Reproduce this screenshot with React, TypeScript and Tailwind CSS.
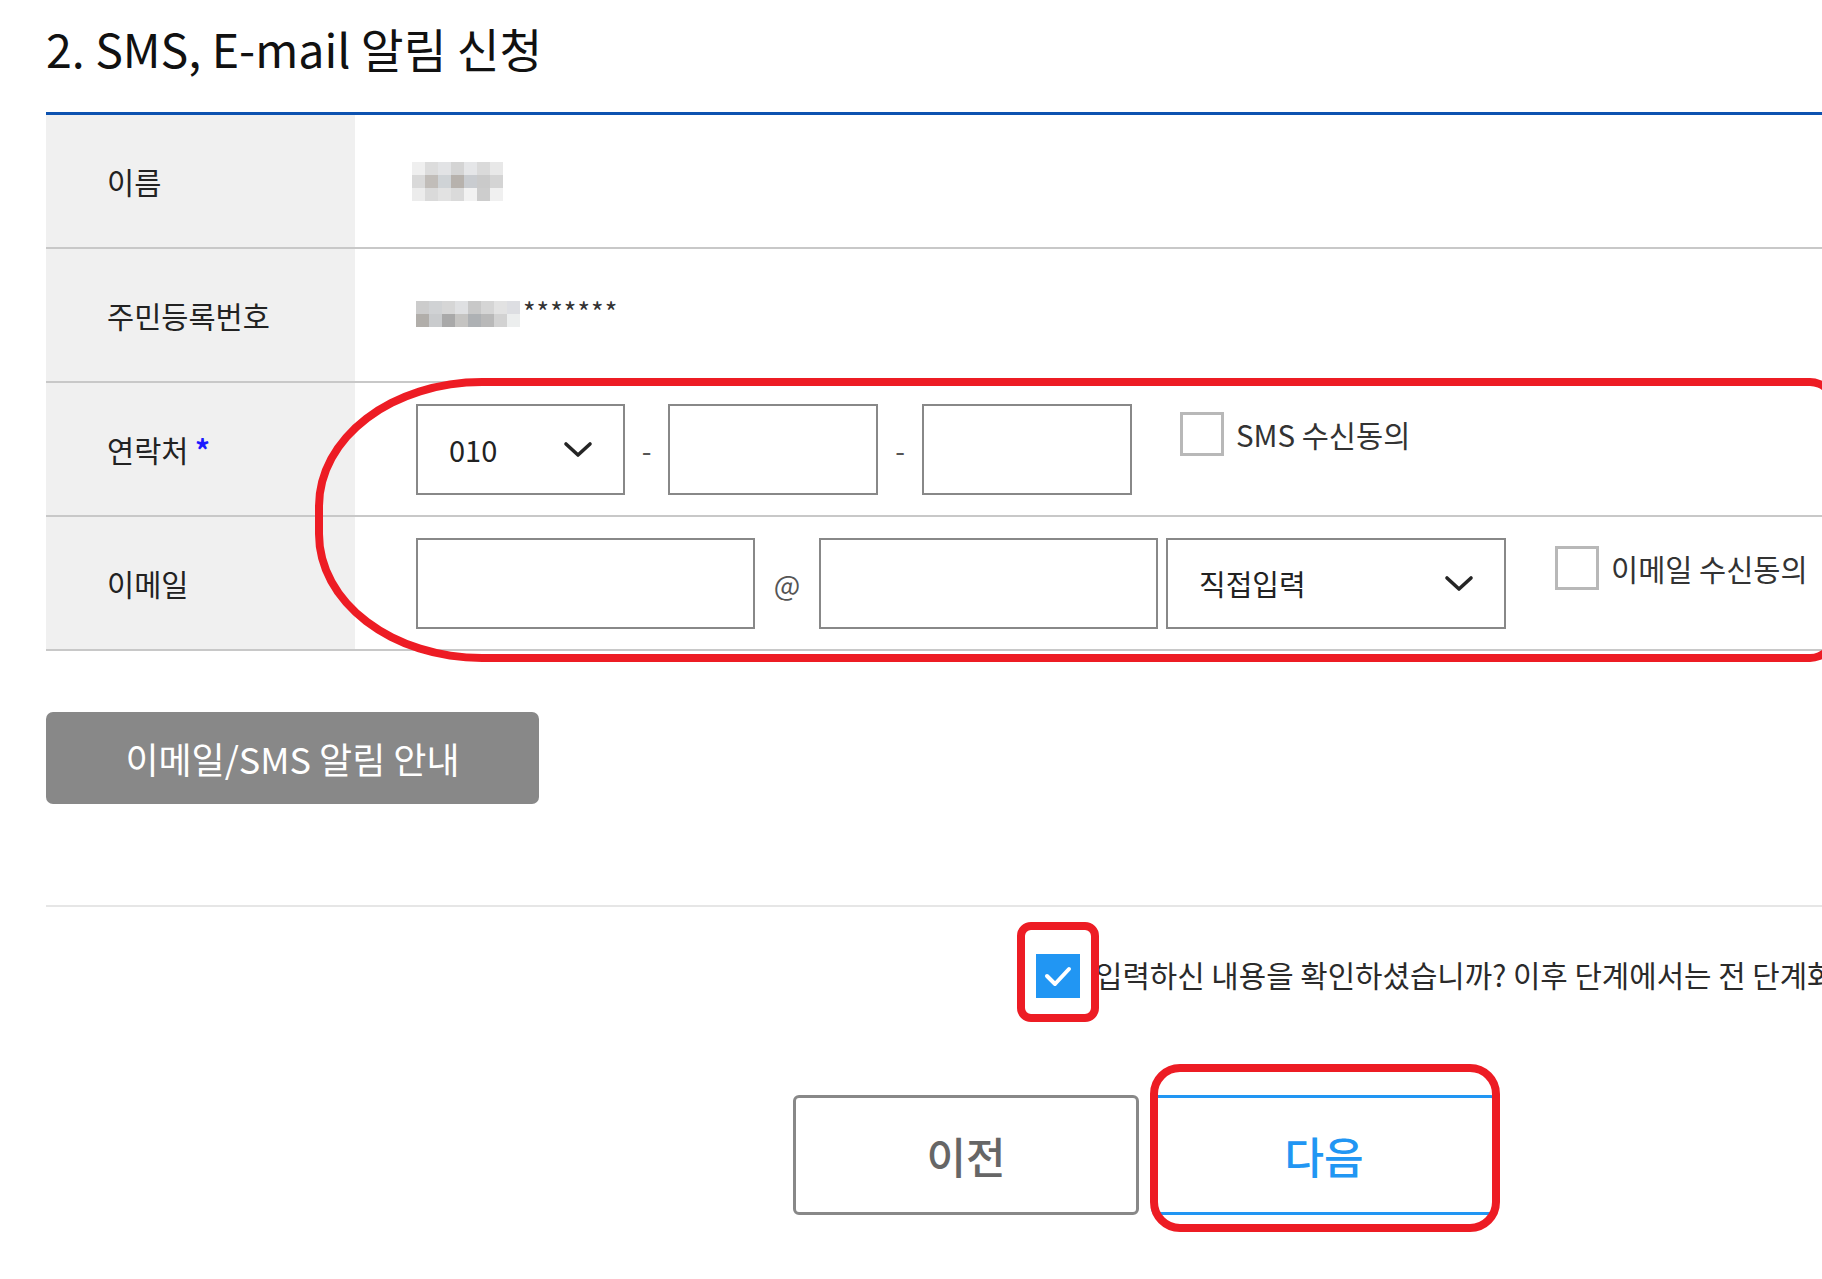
import type { ReactNode } from 'react'

const nameBlur = [
    ['bg-[#efefef]', 'bg-[#dcdcdc]', 'bg-[#e2e3e5]', 'bg-[#d4d4d4]', 'bg-[#e5e6e8]', 'bg-[#dadada]', 'bg-[#e8e8e8]'],
    ['bg-[#d9d9d9]', 'bg-[#c1bdb9]', 'bg-[#cfd3d6]', 'bg-[#b7b2ad]', 'bg-[#c9ccd0]', 'bg-[#cacaca]', 'bg-[#d4d4d4]'],
    ['bg-[#ececec]', 'bg-[#dadada]', 'bg-[#e2e2e2]', 'bg-[#dadada]', 'bg-[#f2f2f2]', 'bg-[#cdcdcd]', 'bg-[#f0f0f0]'],
]

const idBlur = [
    ['bg-[#cccccc]', 'bg-[#d0d2d4]', 'bg-[#d6d6d6]', 'bg-[#dfe0e2]', 'bg-[#c8c8c8]', 'bg-[#d5d5d5]', 'bg-[#e2e2e2]', 'bg-[#dddee2]'],
    ['bg-[#b1aeaa]', 'bg-[#c9cbcd]', 'bg-[#a9a9a9]', 'bg-[#c5c4c2]', 'bg-[#aeb1b4]', 'bg-[#b9b9b9]', 'bg-[#d2d2d2]', 'bg-[#eceeee]'],
]

function Blur({ rows }: { rows: string[][] }) {
    return (
        <div className="flex flex-col">
            {rows.map((row, i) => (
                <div key={i} className="flex">
                    {row.map((c, j) => (
                        <div key={j} className={`h-[13px] w-[13px] ${c}`} />
                    ))}
                </div>
            ))}
        </div>
    )
}

function Chevron() {
    return (
        <svg width="30" height="18" viewBox="0 0 30 18" fill="none">
            <path d="M3 3 L15 14 L27 3" stroke="#252525" strokeWidth="3.6" strokeLinecap="round" strokeLinejoin="round" />
        </svg>
    )
}

function Row({ label, children, top = false }: { label: ReactNode; children: ReactNode; top?: boolean }) {
    return (
        <div className="flex h-[134px] border-b-2 border-[#c8c8c8]">
            <div className="flex w-[309px] shrink-0 items-center bg-[#f0f0f0] pl-[61px] text-[29.5px] text-[#222]">
                {label}
            </div>
            <div className={`flex flex-1 pl-[61px] ${top ? 'items-start pt-[21px]' : 'items-center'}`}>{children}</div>
        </div>
    )
}

function Box({ w, children }: { w: string; children?: ReactNode }) {
    return (
        <div className={`flex h-[91px] shrink-0 items-center justify-between border-2 border-[#888] bg-white pl-[31px] pr-[30px] text-[29px] text-[#222] ${w}`}>
            {children}
        </div>
    )
}

function Sep({ w, children }: { w: string; children: ReactNode }) {
    return <span className={`flex h-[91px] shrink-0 items-center justify-center text-[28px] text-[#555] ${w}`}>{children}</span>
}

function Agree({ label, ml }: { label: string; ml: string }) {
    return (
        <label className={`mt-[8px] flex items-center gap-[12px] ${ml}`}>
            <span className="h-[44px] w-[44px] border-[3px] border-[#b8b8b8] bg-white" />
            <span className="whitespace-nowrap text-[29.5px] text-[#333]">{label}</span>
        </label>
    )
}

export default function App() {
    return (
        <div className="relative h-[1279px] w-[1822px] overflow-hidden bg-white font-[family-name:'Noto_Sans_CJK_KR','Noto_Sans',sans-serif]">
            <div className="ml-[46px] w-[2198px]">
                <h1 className="pt-[19px] text-[46.5px] leading-[58px] font-normal text-[#111]">2. SMS, E-mail 알림 신청</h1>

                <div className="mt-[35px] border-t-[3px] border-[#0d52b0]">
                    <Row label="이름">
                        <div className="-ml-[4px]">
                            <Blur rows={nameBlur} />
                        </div>
                    </Row>
                    <Row label="주민등록번호">
                        <div className="flex items-start">
                            <Blur rows={idBlur} />
                            <span className="ml-[3px] -mt-[6px] text-[27px] leading-[34px] tracking-[1px] text-[#333]">*******</span>
                        </div>
                    </Row>
                    <Row
                        top
                        label={
                            <span>
                                연락처 <span className="font-bold text-[#1a1aff]">*</span>
                            </span>
                        }
                    >
                        <Box w="w-[209px]">
                            <span>010</span>
                            <Chevron />
                        </Box>
                        <Sep w="w-[43px]">-</Sep>
                        <Box w="w-[210px]" />
                        <Sep w="w-[44px]">-</Sep>
                        <Box w="w-[210px]" />
                        <Agree label="SMS 수신동의" ml="ml-[48px]" />
                    </Row>
                    <Row top label="이메일">
                        <Box w="w-[339px]" />
                        <Sep w="w-[64px]">@</Sep>
                        <Box w="w-[339px]" />
                        <div className="w-[8px] shrink-0" />
                        <Box w="w-[340px]">
                            <span>직접입력</span>
                            <Chevron />
                        </Box>
                        <Agree label="이메일 수신동의" ml="ml-[49px]" />
                    </Row>
                </div>

                <button className="mt-[61px] flex h-[92px] w-[493px] items-center justify-center rounded-[7px] bg-[#888] text-[36px] text-white">
                    이메일/SMS 알림 안내
                </button>

                <div className="mt-[101px] border-t-2 border-[#e6e6e6]" />

                <div className="flex items-center pt-[47px] pl-[990px]">
                    <span className="flex h-[44px] w-[44px] shrink-0 items-center justify-center bg-[#2196f3]">
                        <svg width="30" height="22" viewBox="0 0 30 22" fill="none">
                            <path d="M4 11 L12 19 L26 4" stroke="white" strokeWidth="4" strokeLinecap="round" strokeLinejoin="round" />
                        </svg>
                    </span>
                    <span className="ml-[15px] -mt-[4px] whitespace-nowrap text-[29.8px] text-[#2a2a2a]">
                        입력하신 내용을 확인하셨습니까? 이후 단계에서는 전 단계화면으로 돌아갈 수 없습니다.
                    </span>
                </div>

                <div className="mt-[97px] flex justify-center gap-[12px]">
                    <button className="flex h-[120px] w-[346px] items-center justify-center rounded-[6px] border-[3px] border-[#888] bg-white text-[43px] font-medium text-[#666]">
                        이전
                    </button>
                    <button className="flex h-[120px] w-[346px] items-center justify-center rounded-[6px] border-[3px] border-[#2196f3] bg-white text-[43px] font-medium text-[#2196f3]">
                        다음
                    </button>
                </div>
            </div>

            {/* red annotations */}
            <div className="pointer-events-none absolute top-[378px] left-[315px] h-[284px] w-[1523px] rounded-[167px_28px_28px_167px/128px_28px_28px_128px] border-[8px] border-[#ed1c24]" />
            <div className="pointer-events-none absolute top-[922px] left-[1017px] h-[100px] w-[82px] rounded-[14px] border-[8px] border-[#ed1c24]" />
            <div className="pointer-events-none absolute top-[1064px] left-[1150px] h-[168px] w-[350px] rounded-[30px] border-[8px] border-[#ed1c24]" />
        </div>
    )
}
